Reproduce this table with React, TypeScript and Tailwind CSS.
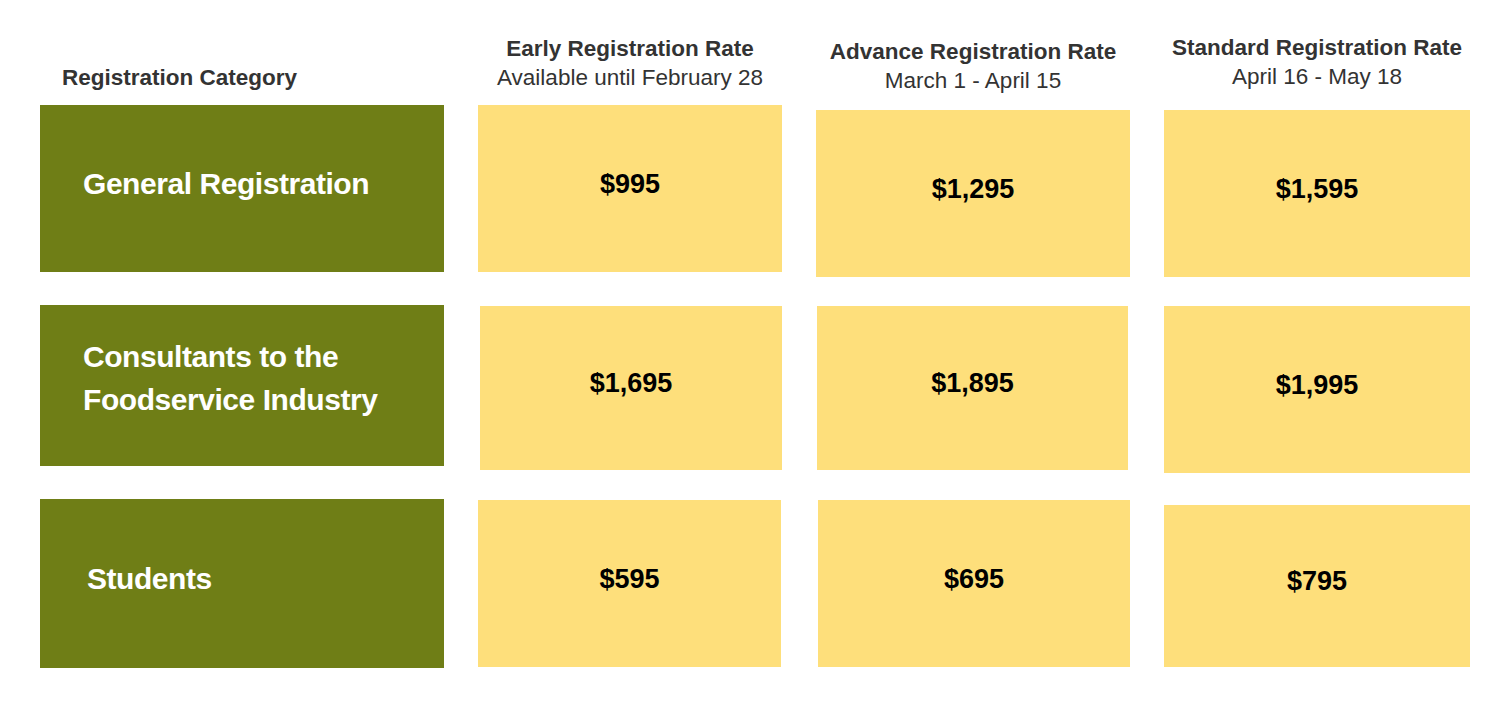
import React from "react";

const font = { fontFamily: '"Liberation Sans", Arial, Helvetica, sans-serif' };

function Green({ className, children }: { className: string; children: React.ReactNode }) {
  return (
    <div className={`w-[404px] bg-[#6f7e16] flex items-center text-white font-bold text-[30px] leading-[43px] tracking-[-0.45px] ${className}`}>
      {children}
    </div>
  );
}

function Price({ className, children }: { className: string; children: React.ReactNode }) {
  return (
    <div className={`bg-[#fedf7b] flex items-center justify-center pb-[10px] text-black font-bold text-[27px] leading-[30px] ${className}`}>
      {children}
    </div>
  );
}

export default function App() {
  return (
    <div className="w-[1508px] h-[703px] bg-white pl-[40px]" style={font}>
      {/* header */}
      <div className="flex gap-[34px] h-[105px] text-[#333333] text-[22.5px] leading-[29px]">
        <div className="w-[404px] pt-[63px] pl-[22px] font-bold">Registration Category</div>
        <div className="w-[304px] pt-[34px] text-center">
          <div className="font-bold">Early Registration Rate</div>
          <div>Available until February 28</div>
        </div>
        <div className="w-[314px] pt-[37px] text-center">
          <div className="font-bold">Advance Registration Rate</div>
          <div>March 1 - April 15</div>
        </div>
        <div className="w-[306px] pt-[33px] text-center">
          <div className="font-bold">Standard Registration Rate</div>
          <div>April 16 - May 18</div>
        </div>
      </div>

      {/* row 1 */}
      <div className="flex gap-[34px] items-start">
        <Green className="h-[167px] pl-[43px] pb-[10px]">General Registration</Green>
        <Price className="w-[304px] h-[167px]">$995</Price>
        <Price className="w-[314px] h-[167px] mt-[5px]">$1,295</Price>
        <Price className="w-[306px] h-[167px] mt-[5px]">$1,595</Price>
      </div>

      {/* row 2 */}
      <div className="flex gap-[34px] items-start mt-[28px]">
        <Green className="h-[161px] pl-[43px] pb-[16px]">
          <div>
            Consultants to the
            <br />
            Foodservice Industry
          </div>
        </Green>
        <Price className="w-[302px] h-[164px] mt-[1px] ml-[2px]">$1,695</Price>
        <Price className="w-[311px] h-[164px] mt-[1px] ml-[1px]">$1,895</Price>
        <Price className="w-[306px] h-[167px] mt-[1px] ml-[2px]">$1,995</Price>
      </div>

      {/* row 3 */}
      <div className="flex gap-[34px] items-start mt-[26px]">
        <Green className="h-[169px] pl-[47px] pb-[11px]">Students</Green>
        <Price className="w-[303px] h-[167px] mt-[1px]">$595</Price>
        <Price className="w-[312px] h-[167px] mt-[1px] ml-[3px]">$695</Price>
        <Price className="w-[306px] h-[162px] mt-[6px] ml-[0px]">$795</Price>
      </div>
    </div>
  );
}
